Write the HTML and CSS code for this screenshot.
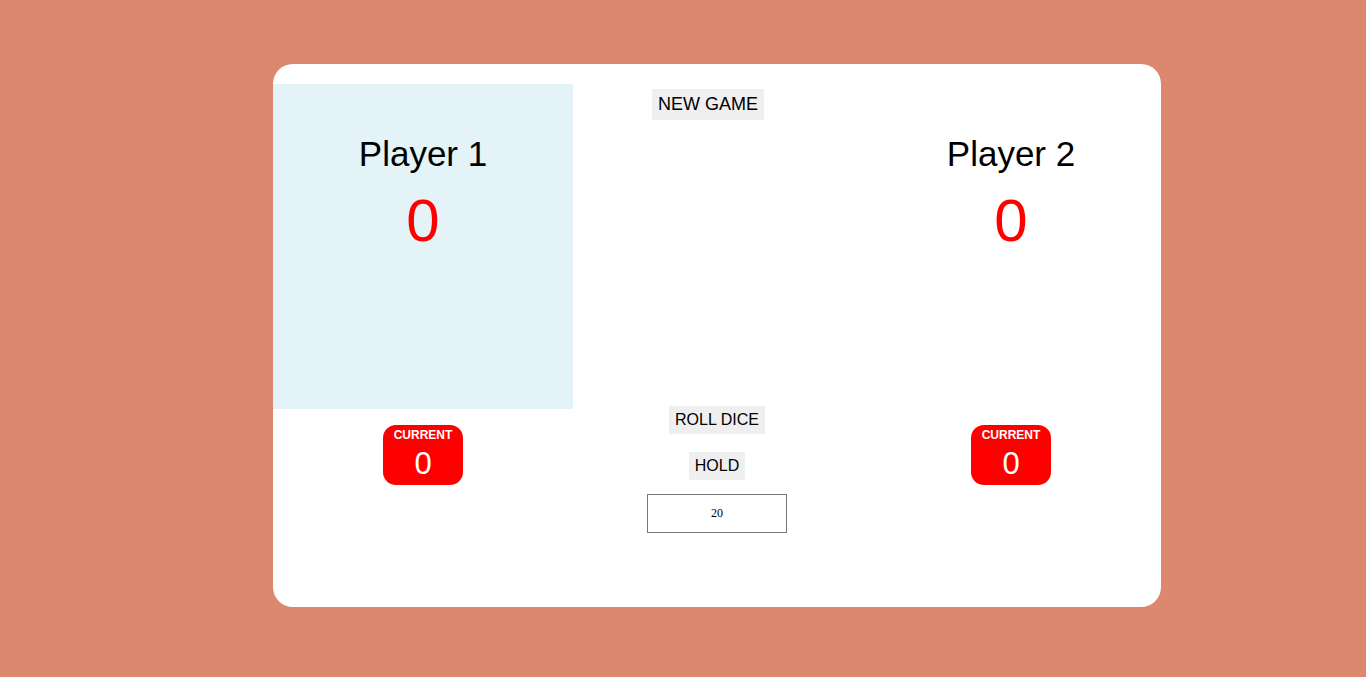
FILE: index.html
```html
<!DOCTYPE html>
<html>
<head>
<meta charset="utf-8">
<title>Pig Game</title>
<link rel="stylesheet" href="styles.css">
</head>
<body>
<main class="game">
  <section class="player player-active">
    <div class="player-panel">
      <h2 class="player-name">Player 1</h2>
      <p class="player-score">0</p>
    </div>
    <div class="current">
      <p class="current-label">CURRENT</p>
      <p class="current-score">0</p>
    </div>
  </section>
  <section class="controls">
    <button class="btn btn-new">NEW GAME</button>
    <button class="btn btn-roll">ROLL DICE</button>
    <button class="btn btn-hold">HOLD</button>
    <input class="target" type="text" value="20">
  </section>
  <section class="player">
    <div class="player-panel">
      <h2 class="player-name">Player 2</h2>
      <p class="player-score">0</p>
    </div>
    <div class="current">
      <p class="current-label">CURRENT</p>
      <p class="current-score">0</p>
    </div>
  </section>
</main>
</body>
</html>
```

FILE: styles.css
```css
html, body {
  margin: 0;
  padding: 0;
}
body {
  background: #dc886f;
  font-family: "Liberation Sans", Arial, sans-serif;
  height: 677px;
  overflow: hidden;
}
.game {
  margin: 64px 0 0 273px;
  width: 888px;
  height: 543px;
  box-sizing: border-box;
  padding-top: 20px;
  background: #fff;
  border-radius: 20px;
  display: grid;
  grid-template-columns: 300px 288px 300px;
  align-items: start;
}
.player {
  display: flex;
  flex-direction: column;
  align-items: center;
}
.player-panel {
  width: 300px;
  height: 325px;
  display: flex;
  flex-direction: column;
  align-items: center;
}
.player-active .player-panel {
  background: #e3f3f7;
}
.player-name {
  margin: 50px 0 0;
  font-size: 35px;
  font-weight: normal;
  line-height: 40px;
  color: #000;
}
.player-score {
  margin: 12px 0 0;
  font-size: 60px;
  line-height: 70px;
  color: #ff0000;
}
.current {
  margin-top: 16px;
  width: 80px;
  height: 60px;
  box-sizing: border-box;
  background: #ff0000;
  border-radius: 13px;
  color: #fff;
  text-align: center;
  padding-top: 3px;
}
.current-label {
  margin: 0;
  font-size: 12px;
  font-weight: bold;
  line-height: 14px;
}
.current-score {
  margin: 4px 0 0;
  font-size: 31px;
  line-height: 36px;
}
.controls {
  display: flex;
  flex-direction: column;
  align-items: center;
}
.btn {
  font-family: "Liberation Sans", Arial, sans-serif;
  background: #efefef;
  border: none;
  color: #000;
  padding: 5px 6px;
  font-size: 16px;
  line-height: 18px;
}
.btn-new {
  margin-top: 5px;
  margin-right: 18px;
  font-size: 18px;
  line-height: 21px;
}
.btn-roll {
  margin-top: 286px;
}
.btn-hold {
  margin-top: 18px;
}
.target {
  margin-top: 14px;
  width: 140px;
  height: 39px;
  box-sizing: border-box;
  border: 1px solid #767676;
  text-align: center;
  font-family: "Liberation Serif", "Times New Roman", serif;
  font-size: 12px;
  color: #000;
  padding: 0;
}
```
